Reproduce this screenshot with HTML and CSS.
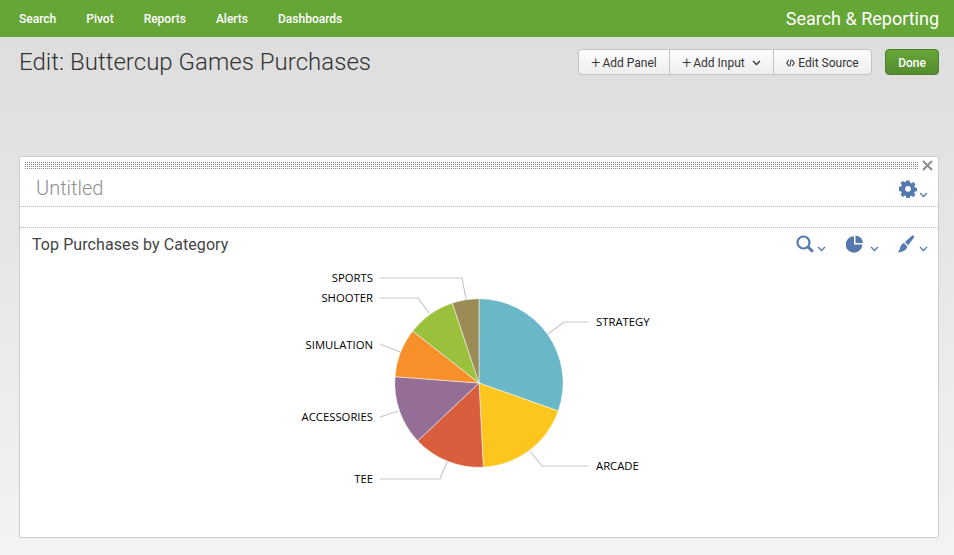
FILE: index.html
```html
<!DOCTYPE html>
<html lang="en">
<head>
    <meta charset="UTF-8">
    <meta name="viewport" content="width=device-width, initial-scale=1.0">
    <title>Edit: Buttercup Games Purchases</title>
    <link rel="stylesheet" href="styles.css">
</head>
<body>
    <nav class="app-bar">
        <ul class="app-menu">
            <li>Search</li>
            <li>Pivot</li>
            <li>Reports</li>
            <li>Alerts</li>
            <li>Dashboards</li>
        </ul>
        <div class="app-name">Search &amp; Reporting</div>
    </nav>

    <header class="page-head">
        <h1>Edit: Buttercup Games Purchases</h1>
        <div class="actions">
            <div class="btn-group">
                <button class="btn btn-panel" type="button"><span class="plus">+</span>Add Panel</button>
                <button class="btn btn-input" type="button"><span class="plus">+</span>Add Input
                    <svg class="btn-chevron" width="9" height="6" viewBox="0 0 9 6"><path d="M1 1l3.500 3.500L8 1" fill="none" stroke="#333" stroke-width="1.300"/></svg>
                </button>
                <button class="btn btn-source" type="button">
                    <svg class="code-icon" width="9" height="8" viewBox="0 0 9 8"><path d="M2.800 1L.8 4l2 3M6.200 1l2 3-2 3M5.200 .5L3.800 7.500" fill="none" stroke="#333" stroke-width="1.100"/></svg>Edit Source
                </button>
            </div>
            <button class="btn-done" type="button">Done</button>
        </div>
    </header>

    <section class="panel">
        <div class="panel-drag">
            <div class="drag-dots"></div>
            <svg class="panel-close" width="11" height="11" viewBox="0 0 11 11"><path d="M1 1l9 9M10 1l-9 9" stroke="#8c8c8c" stroke-width="2"/></svg>
        </div>
        <div class="panel-title">
            <h2>Untitled</h2>
            <div class="tool tool-gear">
                <svg class="gear" width="18" height="18" viewBox="0 0 18 18"><path fill="#5479af" fill-rule="evenodd" d="M7.400 .8h3.200l.4 2.300 1.300.6 2-1.300 2.200 2.200-1.300 2 .6 1.300 2.300.4v3.200l-2.300.4-.6 1.300 1.300 2-2.200 2.200-2-1.300-1.300.6-.4 2.300H7.400L7 16.500l-1.300-.6-2 1.300-2.200-2.200 1.300-2-.6-1.300-2.300-.4V7.100l2.300-.4.6-1.300-1.300-2L3.700 1.200l2 1.300L7 1.900zM9 6.200a2.900 2.900 0 1 0 0 5.800 2.900 2.900 0 0 0 0-5.800z" transform="translate(0 -.300)"/></svg>
                <svg class="chevron" width="9" height="6" viewBox="0 0 9 6"><path d="M1 1l3.500 3.500L8 1" fill="none" stroke="#5479af" stroke-width="1.300"/></svg>
            </div>
        </div>
        <div class="panel-gap"></div>
        <div class="element-head">
            <h3>Top Purchases by Category</h3>
            <div class="tools">
                <div class="tool tool-search">
                    <svg width="18" height="18" viewBox="0 0 18 18"><circle cx="7.500" cy="7.500" r="6" fill="none" stroke="#5479af" stroke-width="2.200"/><path d="M11.800 11.800l5 5" stroke="#5479af" stroke-width="2.800"/></svg>
                    <svg class="chevron" width="9" height="6" viewBox="0 0 9 6"><path d="M1 1l3.500 3.500L8 1" fill="none" stroke="#5479af" stroke-width="1.300"/></svg>
                </div>
                <div class="tool tool-wide">
                    <svg width="18" height="18" viewBox="0 0 18 18"><path fill="#5479af" d="M8 1.200V9.500h8.300A8.300 8.300 0 1 1 8 1.200zM9.500 .5a8 8 0 0 1 7.500 7.500H9.500z"/></svg>
                    <svg class="chevron" width="9" height="6" viewBox="0 0 9 6"><path d="M1 1l3.500 3.500L8 1" fill="none" stroke="#5479af" stroke-width="1.300"/></svg>
                </div>
                <div class="tool">
                    <svg width="18" height="18" viewBox="0 0 18 18"><path fill="#5479af" d="M15.300 .6c1-.7 2.500.6 1.800 1.700L11.200 10.200 7.900 7zM7 8l3.200 3.200c-.3 3.600-4.500 6.200-9.700 6 1.900-1.300 2-3.100 2.900-5.500C4 10 5.400 8.500 7 8z"/></svg>
                    <svg class="chevron" width="9" height="6" viewBox="0 0 9 6"><path d="M1 1l3.500 3.500L8 1" fill="none" stroke="#5479af" stroke-width="1.300"/></svg>
                </div>
            </div>
        </div>
        <svg class="chart" width="918" height="275" viewBox="20 262 918 275">
            <g fill="none" stroke="#c8c8c8" stroke-width="1.200">
                <path d="M380 278H462L466 299"/>
                <path d="M380 298H418L429 313"/>
                <path d="M380 344L400 352"/>
                <path d="M380 417L398 411"/>
                <path d="M380 479H440L447 462"/>
                <path d="M588 466H542L530 451"/>
                <path d="M588 322H564L548 334"/>
            </g>
            <g stroke="#fff" stroke-width="0.500">
                <path fill="#6ab7c7" d="M479 383V298.700A84.300 84.300 0 0 1 558.300 411Z"/>
                <path fill="#fcc61e" d="M479 383L558.300 411A84.300 84.300 0 0 1 483.300 467.200Z"/>
                <path fill="#d85e3d" d="M479 383L483.300 467.200A84.300 84.300 0 0 1 417.700 440.900Z"/>
                <path fill="#956e96" d="M479 383L417.700 440.900A84.300 84.300 0 0 1 395 376.700Z"/>
                <path fill="#f7902b" d="M479 383L395 376.700A84.300 84.300 0 0 1 412.700 331Z"/>
                <path fill="#9bc13c" d="M479 383L412.700 331A84.300 84.300 0 0 1 452.300 303Z"/>
                <path fill="#9a8b57" d="M479 383L452.300 303A84.300 84.300 0 0 1 479 298.700Z"/>
            </g>
            <g class="pie-labels">
                <text x="373" y="282" text-anchor="end">SPORTS</text>
                <text x="373" y="302" text-anchor="end">SHOOTER</text>
                <text x="373" y="349" text-anchor="end">SIMULATION</text>
                <text x="373" y="421" text-anchor="end">ACCESSORIES</text>
                <text x="373" y="483" text-anchor="end">TEE</text>
                <text x="596" y="470">ARCADE</text>
                <text x="596" y="326">STRATEGY</text>
            </g>
        </svg>
    </section>
</body>
</html>
```
FILE: styles.css
```css
* {
    box-sizing: border-box;
}

body {
    margin: 0;
    height: 555px;
    overflow: hidden;
    background: linear-gradient(#dcdcdc, #f3f3f3);
    font-family: Roboto, "Liberation Sans", sans-serif;
    color: #333;
}

.app-bar {
    display: flex;
    justify-content: space-between;
    align-items: center;
    height: 37px;
    padding: 0 15px 0 19px;
    background-color: #65a637;
    color: #fff;
}

.app-menu {
    display: flex;
    gap: 30px;
    margin: 0;
    padding: 0;
    list-style: none;
    font-size: 12px;
    font-weight: 500;
}

.app-name {
    font-size: 18px;
    font-weight: 400;
}

.page-head {
    display: flex;
    justify-content: space-between;
    align-items: flex-start;
    height: 119px;
    padding: 12px 15px 0 19px;
}

.page-head h1 {
    margin: 0;
    font-size: 24px;
    line-height: 26px;
    font-weight: 300;
    letter-spacing: 0.03px;
    color: #333;
}

.actions {
    display: flex;
    gap: 13px;
}

.btn-group {
    display: flex;
    height: 26px;
    border: 1px solid #c4c4c4;
    border-radius: 4px;
    background: linear-gradient(#fdfdfd, #eeeeee);
}

.btn {
    display: flex;
    align-items: center;
    justify-content: center;
    padding: 1px 0 0;
    border: 0;
    border-left: 1px solid #c4c4c4;
    background: none;
    font-family: inherit;
    font-size: 12px;
    color: #333;
}

.btn-panel {
    width: 90px;
    border-left: 0;
}

.btn-input {
    width: 104px;
}

.btn-source {
    width: 98px;
}

.plus {
    margin-right: 2px;
    font-size: 16px;
    line-height: 16px;
    font-weight: 300;
}

.btn-chevron {
    margin-left: 7px;
}

.code-icon {
    margin-right: 3px;
}

.btn-done {
    width: 54px;
    height: 26px;
    padding: 1px 0 0;
    border: 1px solid #4b7f2a;
    border-radius: 4px;
    background: linear-gradient(#65a637, #558c2f);
    font-family: inherit;
    font-size: 12px;
    font-weight: 500;
    color: #fff;
}

.panel {
    height: 382px;
    margin: 0 15px 0 19px;
    border: 1px solid #cccccc;
    border-radius: 2px;
    background-color: #fff;
}

.panel-drag {
    display: flex;
    align-items: center;
    gap: 4px;
    height: 18px;
    padding: 0 5px 2px;
}

.drag-dots {
    flex: 1;
    height: 7px;
    background-image: radial-gradient(circle at 0.5px 0.5px, #8c8c8c 0.7px, transparent 0.8px);
    background-size: 2px 2px;
}

.panel-title {
    display: flex;
    justify-content: space-between;
    align-items: center;
    height: 32px;
    padding: 0 10px 0 16px;
    border-bottom: 1px dotted #bbb;
}

.panel-title h2 {
    margin: 0 0 5px;
    font-size: 20px;
    font-weight: 300;
    color: #8f8f8f;
}

.panel-title .tool {
    margin-bottom: 3px;
}

.panel-gap {
    height: 21px;
    border-bottom: 1px dotted #bbb;
}

.element-head {
    display: flex;
    justify-content: space-between;
    align-items: center;
    height: 34px;
    padding: 0 10px 2px 12px;
}

.element-head h3 {
    margin: 0;
    font-size: 16px;
    font-weight: 400;
    letter-spacing: 0.08px;
    color: #444;
}

.tools {
    display: flex;
    gap: 18px;
}

.tool {
    display: flex;
    align-items: flex-end;
    gap: 4px;
}

.tool-wide {
    gap: 6px;
}

.tool-search {
    gap: 3px;
    margin-right: 2px;
}

.tool-gear {
    gap: 2px;
}

.gear {
    margin-bottom: 1px;
}

.chevron {
    margin-bottom: 1px;
}

.chart {
    display: block;
}

.pie-labels {
    font-family: "Open Sans", sans-serif;
    font-size: 11.3px;
    fill: #000;
}
```
